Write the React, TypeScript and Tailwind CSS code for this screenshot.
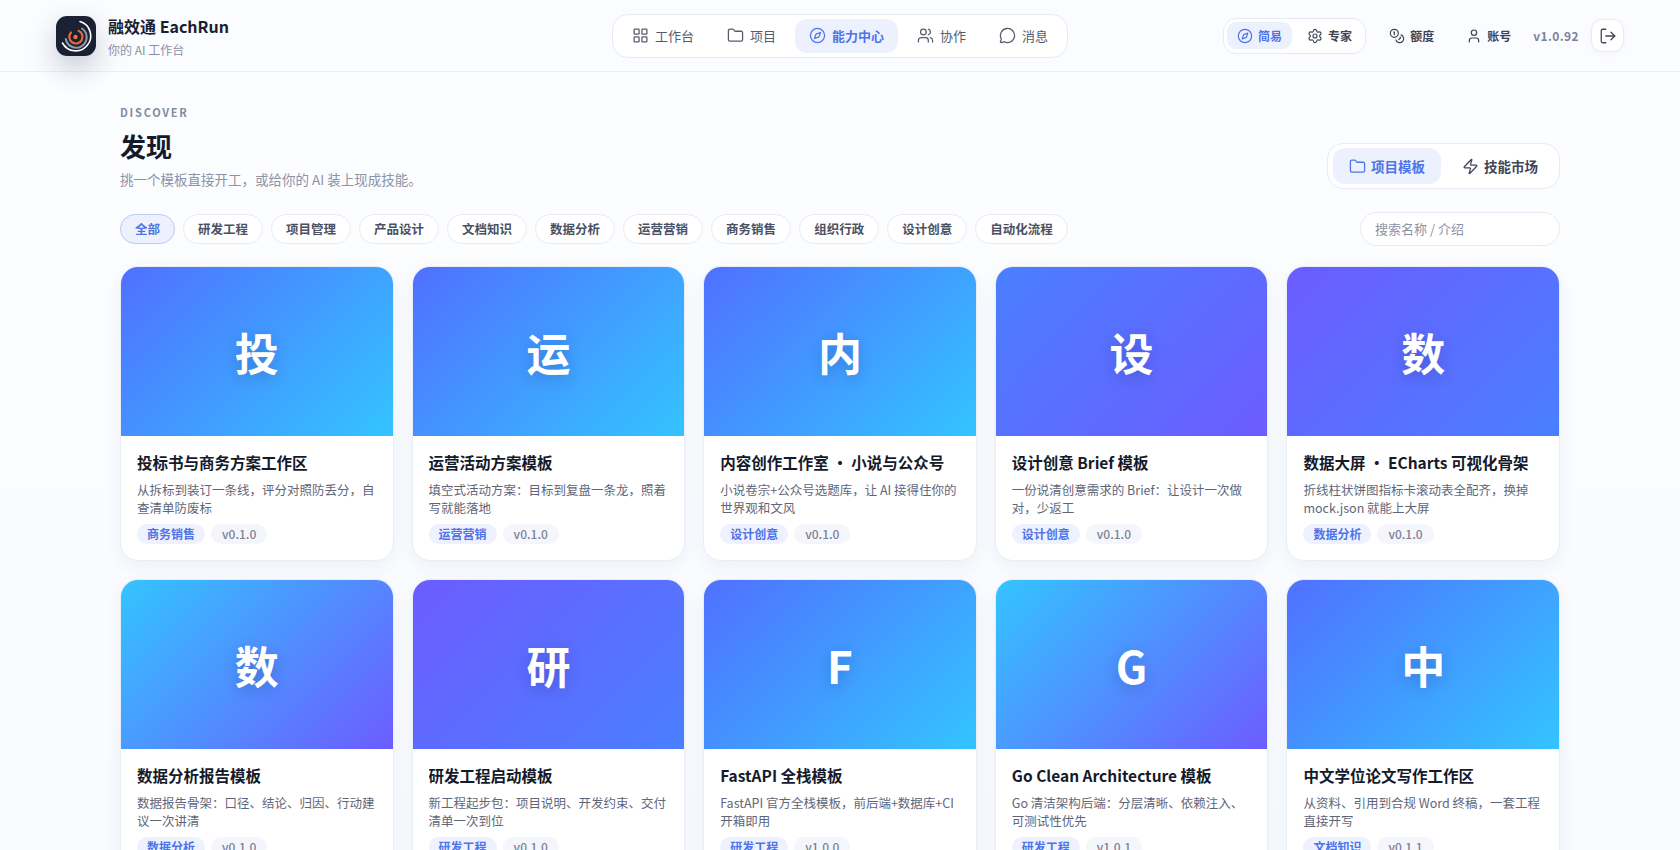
import React from "react";
import { LayoutGrid, Folder, Compass, Users, MessageCircle, Settings, Coins, User, LogOut, Zap } from "lucide-react";

const font = { fontFamily: '"Noto Sans CJK SC", "Noto Sans", sans-serif' };

const B2C = "bg-[linear-gradient(135deg,#5070ff_0%,#33c4ff_100%)]";
const B2P = "bg-[linear-gradient(135deg,#4a7fff_0%,#6c5cff_100%)]";
const P2B = "bg-[linear-gradient(135deg,#6c5cff_0%,#4a7fff_100%)]";
const C2P = "bg-[linear-gradient(135deg,#33c4ff_0%,#6c5cff_100%)]";

const cards = [
  { g: B2C, c: "投", t: "投标书与商务方案工作区", d: "从拆标到装订一条线，评分对照防丢分，自查清单防废标", tag: "商务销售", v: "v0.1.0" },
  { g: B2C, c: "运", t: "运营活动方案模板", d: "填空式活动方案：目标到复盘一条龙，照着写就能落地", tag: "运营营销", v: "v0.1.0" },
  { g: B2C, c: "内", t: "内容创作工作室 · 小说与公众号", d: "小说卷宗+公众号选题库，让 AI 接得住你的世界观和文风", tag: "设计创意", v: "v0.1.0" },
  { g: B2P, c: "设", t: "设计创意 Brief 模板", d: "一份说清创意需求的 Brief：让设计一次做对，少返工", tag: "设计创意", v: "v0.1.0" },
  { g: P2B, c: "数", t: "数据大屏 · ECharts 可视化骨架", d: "折线柱状饼图指标卡滚动表全配齐，换掉 mock.json 就能上大屏", tag: "数据分析", v: "v0.1.0" },
  { g: C2P, c: "数", t: "数据分析报告模板", d: "数据报告骨架：口径、结论、归因、行动建议一次讲清", tag: "数据分析", v: "v0.1.0" },
  { g: P2B, c: "研", t: "研发工程启动模板", d: "新工程起步包：项目说明、开发约束、交付清单一次到位", tag: "研发工程", v: "v0.1.0" },
  { g: B2C, c: "F", t: "FastAPI 全栈模板", d: "FastAPI 官方全栈模板，前后端+数据库+CI 开箱即用", tag: "研发工程", v: "v1.0.0" },
  { g: C2P, c: "G", t: "Go Clean Architecture 模板", d: "Go 清洁架构后端：分层清晰、依赖注入、可测试性优先", tag: "研发工程", v: "v1.0.1" },
  { g: B2C, c: "中", t: "中文学位论文写作工作区", d: "从资料、引用到合规 Word 终稿，一套工程直接开写", tag: "文档知识", v: "v0.1.1" },
];

const chips = ["全部", "研发工程", "项目管理", "产品设计", "文档知识", "数据分析", "运营营销", "商务销售", "组织行政", "设计创意", "自动化流程"];

const nav = [
  { I: LayoutGrid, l: "工作台" },
  { I: Folder, l: "项目" },
  { I: Compass, l: "能力中心", a: true },
  { I: Users, l: "协作" },
  { I: MessageCircle, l: "消息" },
];

function Logo() {
  return (
    <div className="w-10 h-10 rounded-[11px] bg-[#1a2133] shadow-[0_12px_28px_rgba(30,40,80,0.24)] shrink-0">
      <svg viewBox="0 0 40 40" width="40" height="40" fill="none" strokeLinecap="round">
        <path d="M24 5.5A15 15 0 1 1 6.5 27" stroke="#fff" strokeWidth="1.6" />
        <path d="M26 12.5A10.5 10.5 0 1 1 9.8 23" stroke="#8f99ad" strokeWidth="2.1" />
        <path d="M22.5 14.8A6.6 6.6 0 1 1 15 16.5" stroke="#e8683a" strokeWidth="2.2" />
        <circle cx="19.5" cy="21" r="2.2" fill="#f0703c" />
      </svg>
    </div>
  );
}

function Card({ g, c, t, d, tag, v }: (typeof cards)[number]) {
  return (
    <div className="bg-white rounded-[18px] border border-[#e9edf6] overflow-hidden shadow-[0_6px_18px_rgba(40,60,120,0.06)]">
      <div className={`h-[169px] flex items-center justify-center ${g}`}>
        <span className="text-[44px] leading-none font-bold text-white [text-shadow:0_4px_14px_rgba(20,30,80,0.22)]">{c}</span>
      </div>
      <div className="px-4 pt-[15px] pb-[16px]">
        <div className="text-[15.5px] leading-[22px] font-semibold text-[#151a2a] truncate">{t}</div>
        <div className="mt-[8px] text-[12.5px] leading-[18px] text-[#5f6679] h-[36px] overflow-hidden">{d}</div>
        <div className="mt-[7px] flex items-center gap-[6px]">
          <span className="h-5 px-[10px] flex items-center rounded-full bg-[#eef2fe] text-[#4f74e8] text-[12px] font-semibold">{tag}</span>
          <span className="h-5 px-[11px] flex items-center rounded-full bg-[#f5f6fb] text-[#7b8196] text-[12px] font-medium">{v}</span>
        </div>
      </div>
    </div>
  );
}

export default function App() {
  return (
    <div style={font} className="h-screen overflow-hidden bg-[linear-gradient(180deg,#fbfdff_0%,#f9fbfe_100%)] text-[#151a2a]">
      <header className="h-[72px] border-b border-[#eceff5] bg-[#fbfcff] grid grid-cols-[1fr_auto_1fr] items-center px-14">
        <div className="flex items-center gap-3">
          <Logo />
          <div className="pt-[2px]">
            <div className="text-[16px] leading-[22px] font-semibold text-[#1a2030]">融效通 EachRun</div>
            <div className="mt-[5px] text-[12px] leading-4 text-[#8b90a1]">你的 AI 工作台</div>
          </div>
        </div>
        <nav className="h-[44px] flex items-center gap-[5px] px-[5px] bg-white rounded-2xl border border-[#e8ebf3]">
          {nav.map(({ I, l, a }) => (
            <div key={l} className={`h-[34px] px-[14px] flex items-center gap-[6px] rounded-xl text-[13px] ${a ? "bg-[#edf1fd] text-[#4f74e8] font-semibold" : "text-[#565c6e]"}`}>
              <I size={17} strokeWidth={1.8} />
              <span>{l}</span>
            </div>
          ))}
        </nav>
        <div className="flex items-center justify-end">
          <div className="h-[36px] flex items-center gap-[5px] px-[3px] bg-white rounded-[13px] border border-[#e8ebf3]">
            <div className="h-[27px] px-[10px] flex items-center gap-[5px] rounded-[9px] bg-[#edf1fd] text-[#4f74e8] text-[12px] font-semibold">
              <Compass size={16} strokeWidth={1.8} />简易
            </div>
            <div className="h-[27px] px-[10px] flex items-center gap-[5px] text-[#3f4557] text-[12px] font-semibold">
              <Settings size={16} strokeWidth={1.8} />专家
            </div>
          </div>
          <div className="ml-[13px] px-[10px] flex items-center gap-[5px] text-[#3f4557] text-[12px] font-semibold">
            <Coins size={16} strokeWidth={1.8} />额度
          </div>
          <div className="ml-[12px] px-[10px] flex items-center gap-[5px] text-[#3f4557] text-[12px] font-semibold">
            <User size={16} strokeWidth={1.8} />账号
          </div>
          <span className="ml-[12px] text-[12px] font-semibold text-[#7d8397] tracking-[0.4px]">v1.0.92</span>
          <div className="ml-3 w-[33px] h-[33px] flex items-center justify-center rounded-[11px] bg-white border border-[#e8ebf3] text-[#3f4557] shadow-[0_2px_6px_rgba(40,60,120,0.04)]">
            <LogOut size={18} strokeWidth={1.7} />
          </div>
        </div>
      </header>

      <main className="px-[120px] pt-[32px]">
        <div className="flex items-end justify-between">
          <div>
            <div className="text-[11px] leading-4 font-semibold tracking-[0.16em] text-[#858b9e]">DISCOVER</div>
            <h1 className="mt-[8px] text-[26px] leading-[36px] font-bold text-[#151a2a]">发现</h1>
            <p className="mt-[4px] text-[13.5px] leading-[22px] text-[#8d93a5]">挑一个模板直接开工，或给你的 AI 装上现成技能。</p>
          </div>
          <div className="h-[46px] flex items-center gap-[5px] px-[5px] mb-[1px] bg-white rounded-2xl border border-[#e8ebf3]">
            <div className="h-[36px] px-4 flex items-center gap-[5px] rounded-xl bg-[#edf1fd] text-[#4f74e8] text-[13.5px] font-semibold">
              <Folder size={17} strokeWidth={1.8} />项目模板
            </div>
            <div className="h-[36px] px-4 flex items-center gap-[5px] text-[#3f4557] text-[13.5px] font-semibold">
              <Zap size={17} strokeWidth={1.8} />技能市场
            </div>
          </div>
        </div>

        <div className="mt-[22px] flex items-center justify-between">
          <div className="flex items-center gap-2">
            {chips.map((c, i) => (
              <span
                key={c}
                className={`h-[30px] px-[14px] flex items-center rounded-full border text-[12.5px] font-semibold ${i === 0 ? "bg-[#edf1fd] border-[#bcc9f3] text-[#4f74e8]" : "bg-white border-[#e8ebf3] text-[#4b5162]"}`}
              >
                {c}
              </span>
            ))}
          </div>
          <div className="w-[200px] h-[34px] px-[14px] flex items-center rounded-full bg-white border border-[#e8ebf3] text-[13px] text-[#8d93a5]">
            搜索名称 / 介绍
          </div>
        </div>

        <div className="mt-[20px] grid grid-cols-5 gap-x-[18px] gap-y-[18px]">
          {cards.map((c) => (
            <Card key={c.t} {...c} />
          ))}
        </div>
      </main>
    </div>
  );
}
